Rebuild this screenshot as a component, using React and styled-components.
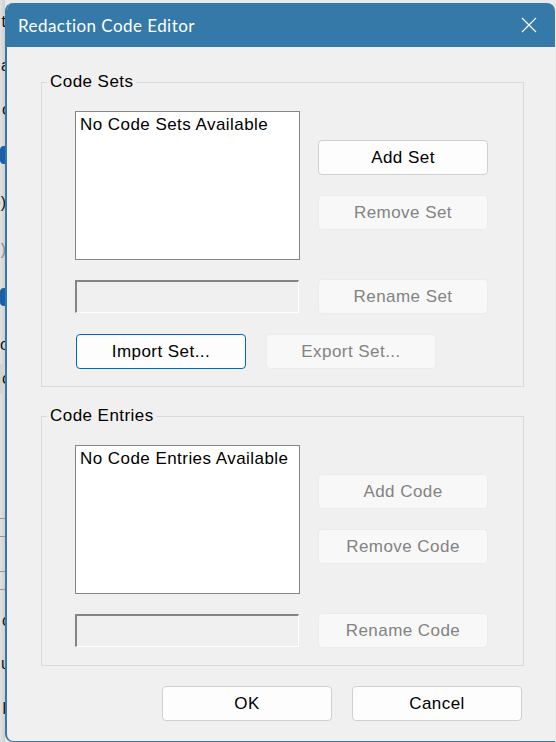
import React from "react";
import styled, { createGlobalStyle, css } from "styled-components";

const GlobalStyle = createGlobalStyle`
  html, body { margin: 0; padding: 0; }
  body {
    background: #e9e9e9;
    font-family: "Liberation Sans", Arial, sans-serif;
    width: 556px;
    height: 742px;
    overflow: hidden;
  }
`;

const Page = styled.div`
  display: flex;
  width: 556px;
  height: 742px;
`;

const Strip = styled.div`
  width: 5px;
  flex: none;
  height: 742px;
  overflow: hidden;
  background: linear-gradient(to right, #e2e2e2, #cfcfcf);
  display: flex;
  flex-direction: column;
`;

const StripRow = styled.div`
  height: ${(p) => p.$h}px;
  flex: none;
  display: flex;
  justify-content: flex-end;
  align-items: center;
  font-size: 16px;
  color: ${(p) => p.$color || "#111"};
  white-space: nowrap;
  background: ${(p) => p.$bg || "transparent"};
  border-bottom: ${(p) => (p.$line ? "1px solid #9a9a9a" : "none")};
  box-sizing: border-box;
`;

const StripGlyph = styled.span`
  display: block;
  margin-right: ${(p) => p.$shift || 0}px;
  line-height: 18px;
`;

const Pill = styled.span`
  display: block;
  width: 8px;
  height: 18px;
  border-radius: 4px;
  background: #1a5fa8;
  margin-right: -3px;
`;

const Dialog = styled.div`
  flex: 1;
  margin: 3px 1px 0 0;
  height: 739px;
  box-sizing: border-box;
  background: #f0f0f0;
  border-left: 2px solid #3479a8;
  border-bottom: 1px solid #3479a8;
  border-radius: 8px 8px 0 8px;
  overflow: hidden;
  display: flex;
  flex-direction: column;
`;

const TitleBar = styled.div`
  height: 44px;
  flex: none;
  background: #3479a8;
  display: flex;
  align-items: center;
  justify-content: space-between;
  margin-left: -2px;
  padding: 0 12px 0 13px;
`;

const Title = styled.span`
  font-family: Lato, "Noto Sans", sans-serif;
  font-size: 17px;
  color: #ffffff;
  letter-spacing: 0.45px;
`;

const CloseButton = styled.button`
  border: none;
  background: transparent;
  width: 24px;
  height: 24px;
  padding: 0;
  display: flex;
  align-items: center;
  justify-content: center;
  margin-right: 2px;
`;

const Body = styled.div`
  display: flex;
  flex-direction: column;
  padding-left: 34px;
`;

const Group = styled.fieldset`
  box-sizing: border-box;
  width: 483px;
  margin: ${(p) => p.$top}px 0 0 0;
  padding: 20px 0 17px 0;
  border: 1px solid #d9d9d9;
  min-width: 0;
`;

const Legend = styled.legend`
  font-size: 17px;
  letter-spacing: 0.45px;
  line-height: 18px;
  color: #000;
  padding: 0 3px;
  margin-left: 5px;
`;

const Content = styled.div`
  margin-left: 33px;
  display: flex;
  flex-direction: column;
`;

const Row = styled.div`
  display: flex;
  align-items: flex-start;
  gap: ${(p) => p.$gap || 18}px;
  margin-top: ${(p) => p.$top || 0}px;
`;

const ListBox = styled.div`
  box-sizing: border-box;
  width: 225px;
  height: 149px;
  background: #ffffff;
  border: 1px solid #82878f;
  padding: 4px 4px;
  font-size: 17px;
  letter-spacing: 0.45px;
  line-height: 18px;
  color: #000;
  white-space: nowrap;
  overflow: hidden;
`;

const ButtonColumn = styled.div`
  display: flex;
  flex-direction: column;
  gap: 20px;
  padding-top: 29px;
`;

const TextField = styled.div`
  box-sizing: border-box;
  width: 224px;
  height: 33px;
  margin-top: 1px;
  background: #f0f0f0;
  border-top: 2px solid #858585;
  border-left: 2px solid #858585;
  border-right: 1px solid #ffffff;
  border-bottom: 1px solid #ffffff;
  margin-right: 1px;
`;

const Button = styled.button`
  box-sizing: border-box;
  width: 170px;
  height: 35px;
  flex: none;
  font-family: "Liberation Sans", Arial, sans-serif;
  font-size: 17px;
  letter-spacing: 0.45px;
  border-radius: 4px;
  padding: 0;
  margin-left: ${(p) => p.$indent || 0}px;
  background: #fdfdfd;
  color: #000;
  border: 1px solid #d0d0d0;
  ${(p) =>
    p.$focus &&
    css`
      border-color: #0067c0;
    `}
  &:disabled {
    background: #f8f8f8;
    color: #838383;
    border-color: #ececec;
  }
`;

const Footer = styled.div`
  width: 483px;
  box-sizing: border-box;
  display: flex;
  justify-content: flex-end;
  gap: 20px;
  padding-right: 2px;
  margin-top: 20px;
`;

function CloseIcon() {
  return (
    <svg width="16" height="16" viewBox="0 0 16 16">
      <path d="M1 1 L15 15 M15 1 L1 15" stroke="#ffffff" strokeWidth="1.2" fill="none" />
    </svg>
  );
}

function BackgroundStrip() {
  return (
    <Strip>
      <StripRow $h={13} />
      <StripRow $h={18}><StripGlyph $shift={-1}>t</StripGlyph></StripRow>
      <StripRow $h={26} />
      <StripRow $h={18}><StripGlyph $shift={-5}>a</StripGlyph></StripRow>
      <StripRow $h={26} />
      <StripRow $h={18}><StripGlyph $shift={-6}>o</StripGlyph></StripRow>
      <StripRow $h={27} />
      <StripRow $h={18}><Pill /></StripRow>
      <StripRow $h={30} />
      <StripRow $h={18}><StripGlyph $shift={-1}>e)</StripGlyph></StripRow>
      <StripRow $h={29} />
      <StripRow $h={18} $color="#888"><StripGlyph $shift={-1}>)</StripGlyph></StripRow>
      <StripRow $h={29} />
      <StripRow $h={18}><Pill /></StripRow>
      <StripRow $h={30} />
      <StripRow $h={18}><StripGlyph $shift={-4}>o</StripGlyph></StripRow>
      <StripRow $h={10} />
      <StripRow $h={30} $bg="#d4d4d4"><StripGlyph $shift={-5}>c</StripGlyph></StripRow>
      <StripRow $h={125} $line />
      <StripRow $h={18} $line />
      <StripRow $h={35} $line />
      <StripRow $h={18} $line />
      <StripRow $h={22} />
      <StripRow $h={18}><StripGlyph $shift={-5}>c</StripGlyph></StripRow>
      <StripRow $h={25} />
      <StripRow $h={18}><StripGlyph $shift={-5}>u</StripGlyph></StripRow>
      <StripRow $h={27} />
      <StripRow $h={18}><StripGlyph $shift={-1}>l</StripGlyph></StripRow>
    </Strip>
  );
}

export default function App() {
  return (
    <>
      <GlobalStyle />
      <Page>
        <BackgroundStrip />
        <Dialog>
          <TitleBar>
            <Title>Redaction Code Editor</Title>
            <CloseButton aria-label="Close">
              <CloseIcon />
            </CloseButton>
          </TitleBar>
          <Body>
            <Group $top={26}>
              <Legend>Code Sets</Legend>
              <Content>
                <Row>
                  <ListBox>No Code Sets Available</ListBox>
                  <ButtonColumn>
                    <Button>Add Set</Button>
                    <Button disabled>Remove Set</Button>
                  </ButtonColumn>
                </Row>
                <Row $top={19}>
                  <TextField />
                  <Button disabled>Rename Set</Button>
                </Row>
                <Row $top={20} $gap={20}>
                  <Button $focus $indent={1}>Import Set...</Button>
                  <Button disabled>Export Set...</Button>
                </Row>
              </Content>
            </Group>
            <Group $top={20}>
              <Legend>Code Entries</Legend>
              <Content>
                <Row>
                  <ListBox>No Code Entries Available</ListBox>
                  <ButtonColumn>
                    <Button disabled>Add Code</Button>
                    <Button disabled>Remove Code</Button>
                  </ButtonColumn>
                </Row>
                <Row $top={19}>
                  <TextField />
                  <Button disabled>Rename Code</Button>
                </Row>
              </Content>
            </Group>
            <Footer>
              <Button>OK</Button>
              <Button>Cancel</Button>
            </Footer>
          </Body>
        </Dialog>
      </Page>
    </>
  );
}
